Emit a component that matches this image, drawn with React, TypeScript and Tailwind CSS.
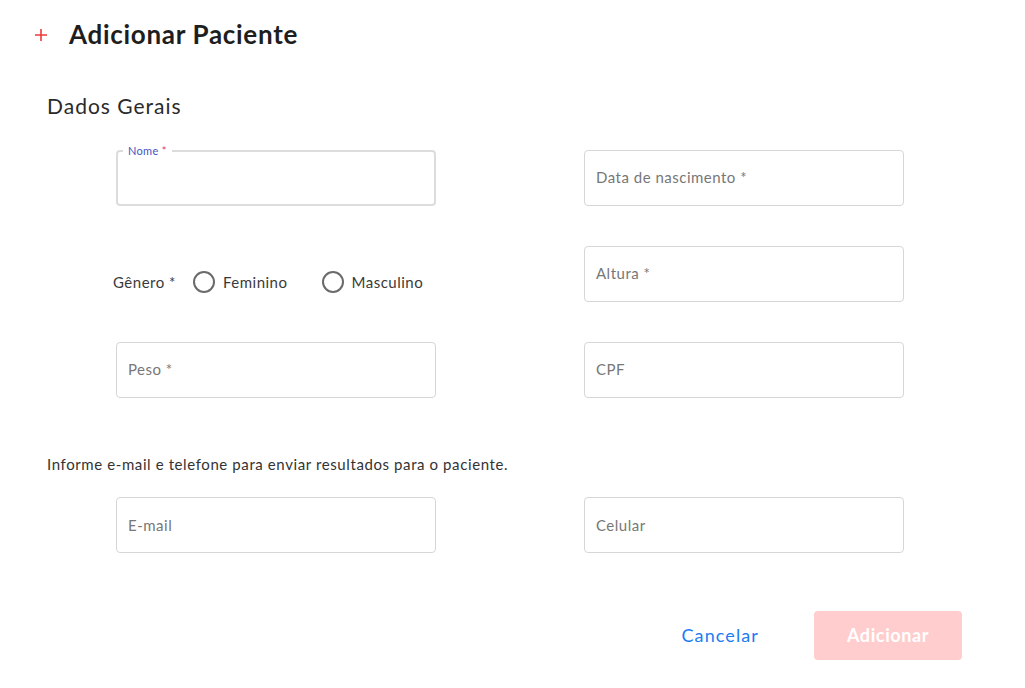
import { useState } from "react";

function Field({ label, notched }: { label: string; notched?: boolean }) {
  if (notched) {
    return (
      <div className="relative h-[56px] w-[320px] rounded-[4px] border-2 border-[#dcdcdc]">
        <span className="absolute -top-[9px] left-[5px] bg-white px-[5px] text-[11px] tracking-[0.3px] text-[#4354c4]">
          Nome <span className="text-[#e8336d]">*</span>
        </span>
      </div>
    );
  }
  return (
    <div className="flex h-[56px] w-[320px] items-center rounded-[4px] border border-[#d6d6d6] px-[11px] text-[15px] tracking-[0.5px] text-[#777777]">
      {label}
    </div>
  );
}

function Radio({ label, checked, onClick }: { label: string; checked: boolean; onClick: () => void }) {
  return (
    <button type="button" onClick={onClick} className="flex items-center gap-[8px]">
      <span className="flex h-[22px] w-[22px] items-center justify-center rounded-full border-2 border-[#6b6b6b]">
        {checked && <span className="h-[10px] w-[10px] rounded-full bg-[#6b6b6b]" />}
      </span>
      <span className="text-[15px] tracking-[0.5px] text-[#3a3a3a]">{label}</span>
    </button>
  );
}

export default function App() {
  const [gender, setGender] = useState("");

  return (
    <div className="min-h-[688px] w-[1025px] bg-white font-['Lato',sans-serif] text-[#222]">
      {/* Cabeçalho */}
      <div className="flex items-center pl-[34px] pt-[15px]">
        <svg width="14" height="14" viewBox="0 0 14 14" className="mr-[21px]">
          <path d="M7 1v12M1 7h12" stroke="#f03a3a" strokeWidth="1.6" />
        </svg>
        <h1 className="text-[26px] font-bold tracking-[0.7px] text-[#1e1e1e]">Adicionar Paciente</h1>
      </div>

      <h2 className="pl-[47px] pt-[36px] text-[21px] tracking-[1px] text-[#2a2a2a]">Dados Gerais</h2>

      <div className="ml-[116px] mt-[28px] grid grid-cols-[320px_320px] gap-x-[148px] gap-y-[40px]">
        <Field label="Nome *" notched />
        <Field label="Data de nascimento *" />
        <div className="-ml-[3px] flex items-end pb-[8px]">
          <span className="mr-[17px] text-[15px] tracking-[0.5px] text-[#3a3a3a]">Gênero *</span>
          <div className="flex gap-[34px]">
            <Radio label="Feminino" checked={gender === "f"} onClick={() => setGender("f")} />
            <Radio label="Masculino" checked={gender === "m"} onClick={() => setGender("m")} />
          </div>
        </div>
        <Field label="Altura *" />
        <Field label="Peso *" />
        <Field label="CPF" />
      </div>

      <p className="pl-[47px] pt-[55px] text-[15px] tracking-[0.6px] text-[#333]">
        Informe e-mail e telefone para enviar resultados para o paciente.
      </p>

      <div className="ml-[116px] mt-[22px] grid grid-cols-[320px_320px] gap-x-[148px]">
        <Field label="E-mail" />
        <Field label="Celular" />
      </div>

      <div className="mt-[58px] flex items-center justify-end pr-[63px]">
        <button type="button" className="mr-[55px] text-[18px] tracking-[1.1px] text-[#1a7cf2]">
          Cancelar
        </button>
        <button
          type="button"
          disabled
          className="h-[49px] w-[148px] rounded-[4px] bg-[#ffcdcd] text-[18px] font-bold tracking-[0.6px] text-white"
        >
          Adicionar
        </button>
      </div>
    </div>
  );
}
